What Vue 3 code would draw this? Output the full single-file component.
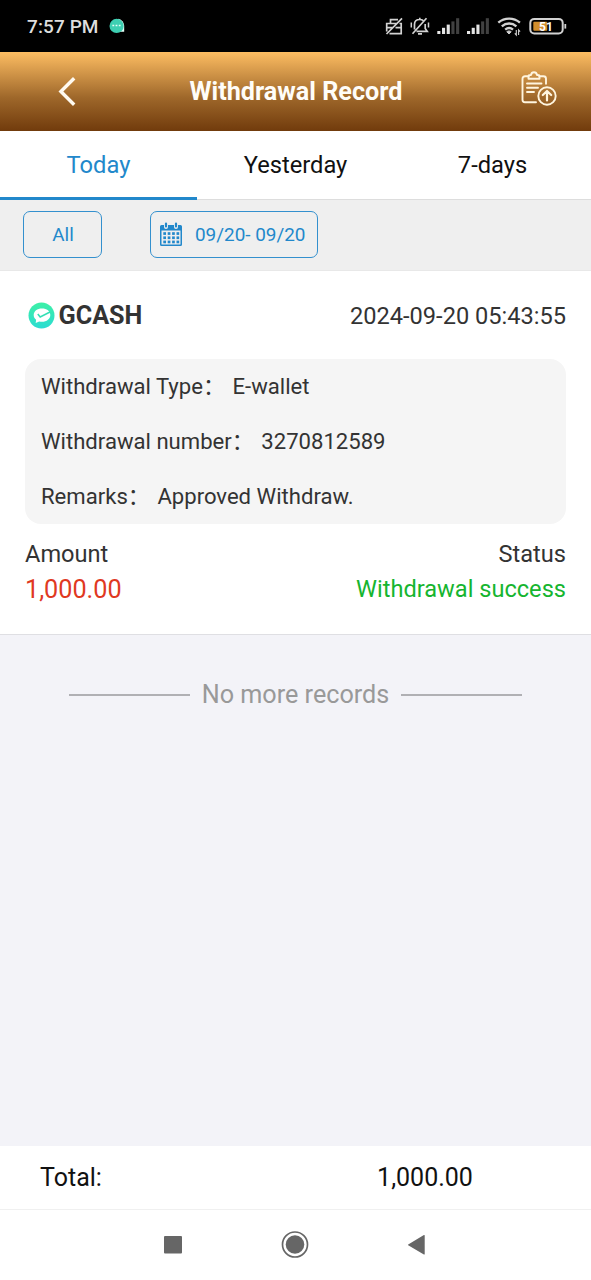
<script setup>
const tabs = ['Today', 'Yesterday', '7-days']
const details = [
  { label: 'Withdrawal Type', value: 'E-wallet' },
  { label: 'Withdrawal number', value: '3270812589' },
  { label: 'Remarks', value: 'Approved Withdraw.' },
]
const dots = [0, 1, 2, 3].flatMap((c) => [0, 1, 2].map((r) => ({ x: 3.3 + c * 4.4, y: 10.2 + r * 4.2 })))
const bars = [0, 1, 2, 3, 4]
</script>

<template>
  <div class="screen">
    <div class="status">
      <span class="clock">7:57 PM</span>
      <svg class="bubble" width="16" height="16" viewBox="0 0 16 16">
        <path d="M9 .8a7.200 7.200 0 0 1 6.200 7V13.800H10Z" fill="#e6fff8" />
        <circle cx="7.600" cy="7.900" r="7.100" fill="#3ecfb2" />
        <path d="M3.4 7.600h1.800M6.600 7.600h1.800M9.800 7.600h1.800" stroke="#e6fff8" stroke-width="1.500" />
      </svg>
      <svg class="tray" width="190" height="24" viewBox="0 0 190 24" fill="none" stroke="#d2d2d2" stroke-width="1.700">
        <path d="M10.500 9.500V5.600h7.500M6.700 17.500v-8h10M19.500 9.500h1.700v10.200H9.500M7 13.700h5.500M15.500 13.700h5.500M6.500 20 22 4.300" />
        <path d="M34.500 15.500V10.500c0-3 2-5 5.200-5 1.500 0 2.700.4 3.500 1.200M45.200 10v4.500l2 2.800H36.500M39.800 5.500V3.800M38 19.900h4M32.500 19.800 46.500 4.300" />
        <path d="M31.300 8.500v5M48.500 8.500v5" stroke-width="1.500" />
        <g stroke="none">
          <template v-for="o in [57.300, 87]" :key="o">
            <rect v-for="i in bars" :key="i" :x="o + i * 4.700" :y="17 - i * 3.200" width="3.100" :height="3 + i * 3.200" :fill="i < 3 ? '#e4e4e4' : '#414141'" />
          </template>
        </g>
        <g stroke-width="2.400">
          <path d="M118.300 8.700c6.300-5.400 15.300-5.400 21.600 0" />
          <path d="M121.800 12.300c4.300-3.700 10.300-3.700 14.600 0" />
          <path d="M125.200 15.700c2.400-2 5.400-2 7.800 0" />
        </g>
        <path d="m126.800 17.700 2.200 2.300 2.200-2.300c-1.200-1-3.200-1-4.400 0Z" fill="#d2d2d2" stroke-width="1" />
        <path d="M136.300 16v5l-1.500-1.600M138.600 21v-5l1.500 1.600" stroke-width="1.100" />
        <rect x="150.300" y="4.900" width="32.400" height="14.600" rx="4" stroke-width="2" />
        <rect x="153.300" y="7.700" width="14" height="9" rx="1" fill="#d18d2c" stroke="none" />
        <path d="M185.300 10v4.600" stroke-width="1.800" />
        <text x="166" y="17" text-anchor="middle" fill="#fff" stroke="none" class="pct">51</text>
      </svg>
    </div>

    <header class="header">
      <svg class="back" width="20" height="32" viewBox="0 0 20 32">
        <path d="M16.200 2.300 2.900 15.500l13.300 13.300" fill="none" stroke="#fffaf0" stroke-width="3.400" />
      </svg>
      <h1>Withdrawal Record</h1>
      <svg class="clip" width="36" height="36" viewBox="0 0 36 36" fill="none" stroke="#fff5df" stroke-width="1.900" stroke-linecap="round" stroke-linejoin="round">
        <path d="M7.500 5.200H4A2.500 2.500 0 0 0 1.500 7.700v21A2.500 2.500 0 0 0 4 31.200h11M18.500 5.200h4a2.500 2.500 0 0 1 2.500 2.500v5" />
        <path d="M7.500 7.800V5.500c0-1 .8-1.500 1.800-1.500h.7c.6-3.600 5.400-3.600 6 0h.7c1 0 1.800.5 1.800 1.500v2.300Z" />
        <path d="M6 12.500h14.500M6 16.800h11M6 21h7" />
        <circle cx="26" cy="25" r="8.700" />
        <path d="M26 29.500v-9M21.800 24l4.200-4 4.200 4" stroke-width="2.200" />
      </svg>
    </header>

    <nav class="tabs">
      <div v-for="(t, i) in tabs" :key="t" class="tab" :class="{ active: i === 0 }">{{ t }}</div>
    </nav>

    <div class="filters">
      <div class="chip all">All</div>
      <div class="chip range">
        <svg width="22" height="25" viewBox="0 0 22 25">
          <path fill="#2288cb" fill-rule="evenodd" d="M1.500 3H4v2a2 2 0 0 0 4 0V3h6v2a2 2 0 0 0 4 0V3h2.500A1.500 1.500 0 0 1 22 4.500v18a1.500 1.500 0 0 1-1.500 1.500h-19A1.500 1.500 0 0 1 0 22.500v-18A1.500 1.500 0 0 1 1.500 3ZM1.500 8.500v14h19v-14Z" />
          <path d="M6 1.500v3M16 1.500v3" stroke="#2288cb" stroke-width="2.200" stroke-linecap="round" />
          <rect v-for="(d, i) in dots" :key="i" :x="d.x" :y="d.y" width="2.700" height="2.700" fill="#2288cb" />
        </svg>
        <span>09/20- 09/20</span>
      </div>
    </div>

    <section class="record">
      <div class="top">
        <svg width="27" height="27" viewBox="0 0 27 27">
          <defs>
            <linearGradient id="mint" x1="0" y1="0" x2="0" y2="1">
              <stop offset="0" stop-color="#3df0a6" />
              <stop offset="1" stop-color="#2bdcd2" />
            </linearGradient>
          </defs>
          <circle cx="13.500" cy="13.500" r="13" fill="url(#mint)" />
          <path d="M14 6.500c4.800 0 8.300 2.700 8.300 6.500s-3.500 6.800-8.300 6.800c-1 0-2-.1-2.800-.4L7.700 21l.4-3.200c-1.500-1.200-2.400-2.800-2.400-4.800 0-3.800 3.500-6.500 8.300-6.500Z" fill="#fff" />
          <path d="m9.800 12 2.400 2.900 9.800-4.900" fill="none" stroke="#35dfb5" stroke-width="1.600" />
        </svg>
        <b>GCASH</b>
        <time>2024-09-20 05:43:55</time>
      </div>
      <div class="box">
        <p v-for="d in details" :key="d.label"><span>{{ d.label }}：</span><span class="value">{{ d.value }}</span></p>
      </div>
      <div class="line"><span>Amount</span><span>Status</span></div>
      <div class="line result"><span class="amount">1,000.00</span><span class="ok">Withdrawal success</span></div>
    </section>

    <main class="rest">
      <div class="end"><i></i><span>No more records</span><i></i></div>
    </main>

    <footer class="total"><span>Total:</span><span class="sum">1,000.00</span></footer>

    <div class="keys">
      <svg width="591" height="70" viewBox="0 0 591 70" fill="#666">
        <rect x="164" y="26" width="18" height="17.500" rx="1" />
        <circle cx="295" cy="34.500" r="9.300" />
        <circle cx="295" cy="34.500" r="12.500" fill="none" stroke="#666" stroke-width="1.700" />
        <path d="M424.700 25.500v18.500q0 .8-.8.400l-15.700-9.200q-.6-.4 0-.8l15.700-9.300q.8-.4.800.4Z" />
      </svg>
    </div>
  </div>
</template>

<style>
body { margin: 0; background: #fff; }
</style>

<style scoped>
.screen { width: 591px; height: 1280px; display: flex; flex-direction: column; overflow: hidden; box-sizing: border-box; font-family: Roboto, "Noto Sans CJK SC", sans-serif; color: #333; background: #fff; }
.screen * { box-sizing: border-box; }
.status { height: 52px; flex: none; background: #000; display: flex; align-items: center; padding: 0 21px 0 27px; }
.clock { font-size: 19px; line-height: 24px; padding-top: 1px; font-weight: 500; color: #dedede; letter-spacing: 0.1px; }
.bubble { margin-left: 10px; }
.tray { margin-left: auto; }
.pct { font: 700 12px Roboto, sans-serif; }
.header { height: 79px; flex: none; display: flex; align-items: center; background: linear-gradient(#fdbd62, #9e672a 58%, #713b0c); padding: 0 34px 0 58px; }
h1 { flex: 1; margin: 0; padding-right: 7px; text-align: center; color: #fffdf8; font-size: 25.200px; font-weight: 700; line-height: 30px; }
.clip { position: relative; top: -3px; }
.tabs { height: 69px; flex: none; display: grid; grid-template-columns: repeat(3, 1fr); grid-template-rows: 69px; }
.tab { text-align: center; font-size: 23.700px; line-height: 69px; color: #111; box-shadow: inset 0 -1px #ddd; }
.tab.active { color: #2288cb; box-shadow: inset 0 -3px #2288cb; }
.filters { height: 71px; flex: none; display: flex; align-items: flex-start; padding: 11px 0 0 23px; background: #efefef; border-bottom: 1px solid #e8e8e8; }
.chip { height: 47px; border: 1.500px solid #3390ce; border-radius: 7px; color: #2288cb; font-size: 18.900px; display: flex; align-items: center; }
.all { width: 79px; justify-content: center; padding-left: 1px; }
.range { width: 168px; margin-left: 48px; padding-left: 9px; gap: 13px; }
.record { height: 364px; flex: none; padding: 29px 25px 0; border-bottom: 1px solid #dfdfe3; }
.top { display: flex; align-items: center; height: 30px; padding-left: 3px; }
.top b { font-size: 25.200px; line-height: 30px; padding-top: 2px; margin-left: 3.500px; }
.top time { font-size: 23.600px; line-height: 30px; padding-top: 1px; margin-left: auto; }
.box { margin-top: 29px; height: 165px; border-radius: 16px; background: #f5f5f5; padding: 0 16px; }
.box p { margin: 0; height: 55px; line-height: 55px; font-size: 22.100px; white-space: nowrap; }
.value { margin-left: 7.500px; }
.line { display: flex; justify-content: space-between; font-size: 23.600px; line-height: 32px; margin-top: 14px; }
.result { margin-top: 3px; }
.amount { color: #e0391f; font-size: 25.200px; padding-top: 1px; }
.ok { color: #16b52f; }
.rest { flex: 1; background: #f3f3f8; padding-top: 45px; }
.end { display: flex; align-items: center; justify-content: center; gap: 12px; color: #999; font-size: 25.200px; line-height: 30px; }
.end i { width: 121px; height: 1.500px; background: #b0b0b4; }
.total { height: 64px; flex: none; border-bottom: 1px solid #f0f0f0; display: flex; align-items: center; padding: 0 40px; font-size: 25px; color: #111; }
.sum { width: 192px; text-align: center; margin-left: auto; margin-right: 30px; }
.keys { height: 70px; flex: none; }
.keys svg { display: block; }
</style>
